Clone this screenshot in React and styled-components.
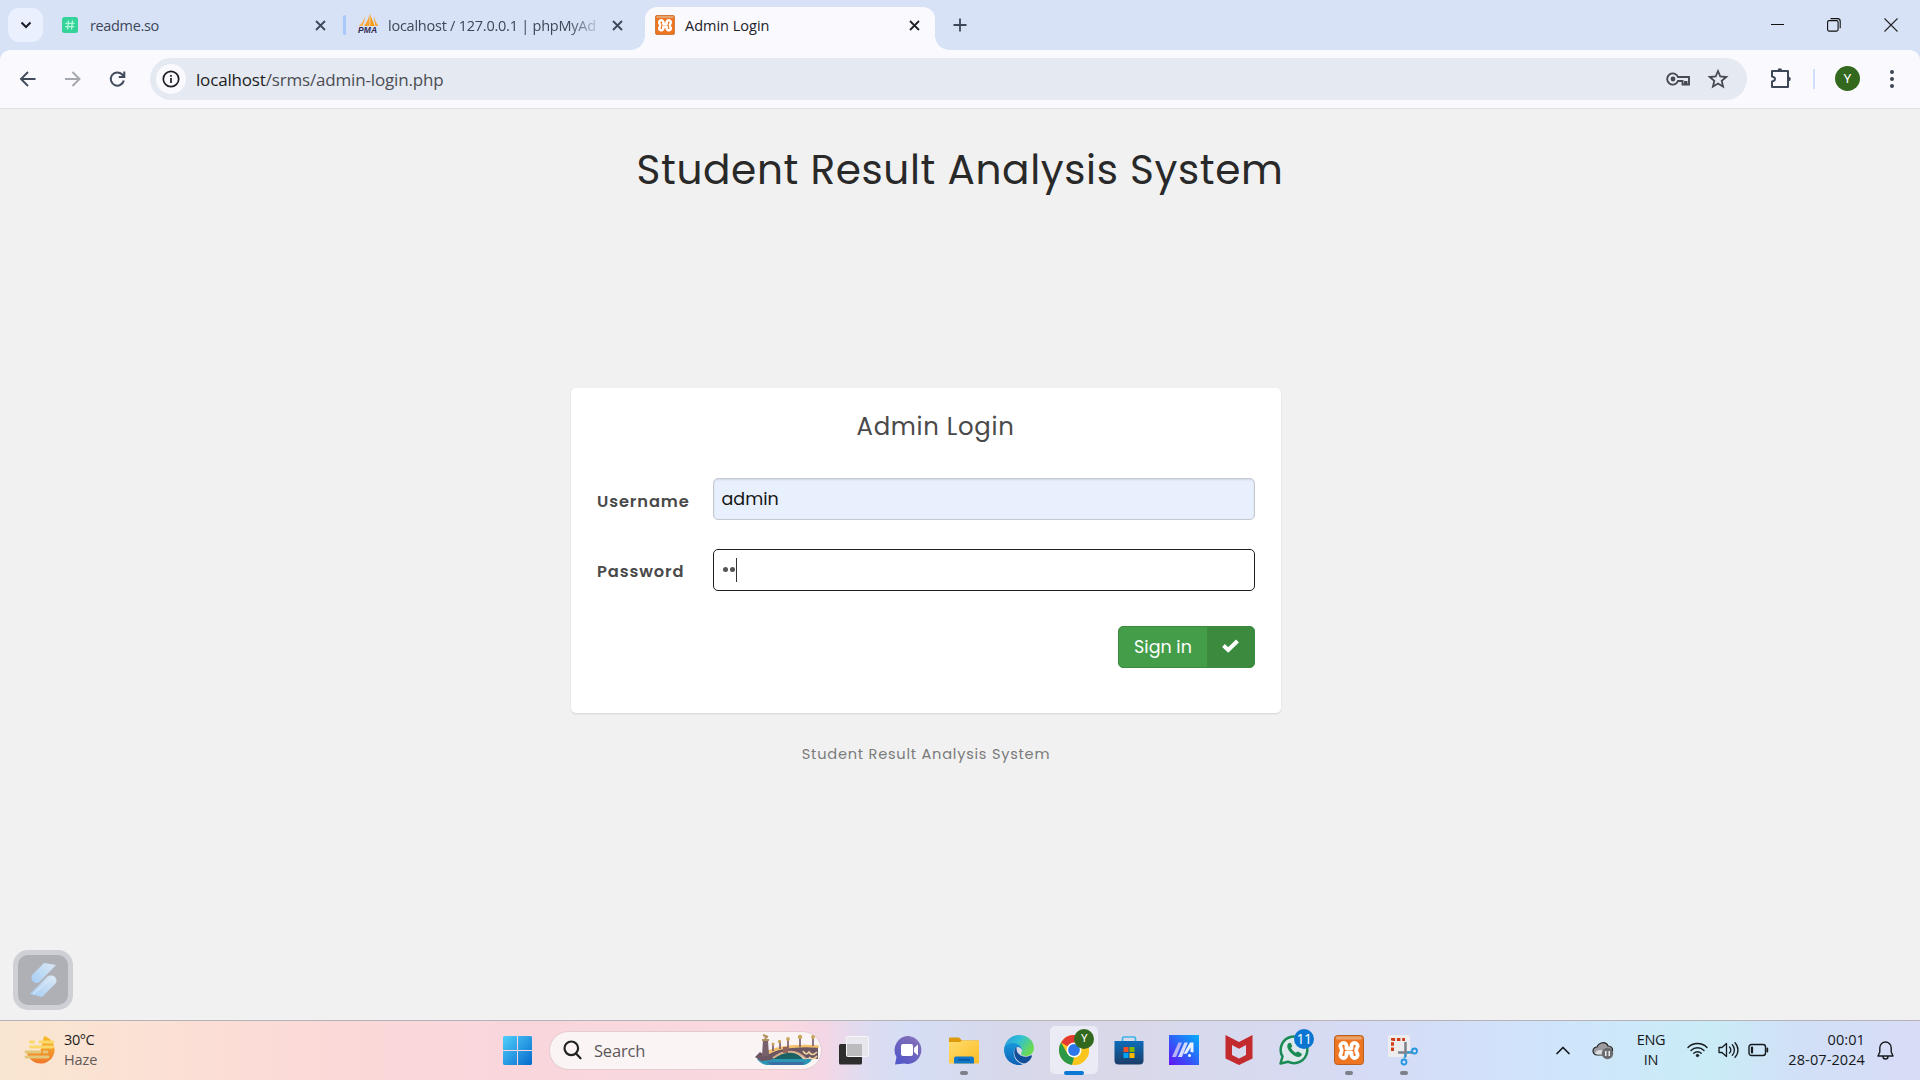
import React from "react";
import styled, { createGlobalStyle, css } from "styled-components";

const GlobalStyle = createGlobalStyle`
  * { box-sizing: border-box; }
  body { margin: 0; overflow: hidden; }
  h1, h2, p { margin: 0; }
  button, input { font: inherit; margin: 0; }
  svg { display: block; flex: none; }
`;

const uiFont = `"Segoe UI", "Open Sans", "Noto Sans", sans-serif`;
const siteFont = `Poppins, Inter, "Liberation Sans", sans-serif`;

const Screen = styled.div`
  width: 1920px;
  height: 1080px;
  display: flex;
  flex-direction: column;
  overflow: hidden;
  font-family: ${uiFont};
`;

/* ---------- browser tab strip ---------- */
const TabStrip = styled.div`
  height: 50px;
  flex: none;
  display: flex;
  align-items: center;
  background: #d8e2f6;
  padding-left: 8px;
`;
const TabSearch = styled.div`
  width: 35px;
  height: 34px;
  border-radius: 11px;
  background: #eaf0fe;
  display: grid;
  place-items: center;
`;
const Tab = styled.div`
  width: ${(p) => p.$width}px;
  height: 43px;
  margin-left: ${(p) => p.$gap || 0}px;
  margin-top: 7px;
  padding: 0 ${(p) => p.$end}px 7px ${(p) => p.$start}px;
  display: flex;
  align-items: center;
  color: #3d475a;
  position: relative;
  ${(p) =>
    p.$active &&
    css`
      background: #faf9fe;
      border-radius: 12px 12px 0 0;
      color: #202229;
      &::before,
      &::after {
        content: "";
        position: absolute;
        bottom: 0;
        width: 14px;
        height: 14px;
      }
      &::before {
        left: -14px;
        background: radial-gradient(circle at 0 0, transparent 13.5px, #faf9fe 14px);
      }
      &::after {
        right: -14px;
        background: radial-gradient(circle at 100% 0, transparent 13.5px, #faf9fe 14px);
      }
    `}
`;
const TabTitle = styled.span`
  flex: 1;
  min-width: 0;
  margin-left: ${(p) => p.$gap}px;
  padding-top: 1px;
  font-size: 14.5px;
  line-height: 20px;
  letter-spacing: ${(p) => p.$ls || 0}px;
  white-space: nowrap;
  ${(p) =>
    p.$fade &&
    css`
      margin-right: 14px;
      mask-image: linear-gradient(to right, #000 86%, rgba(0, 0, 0, 0.15));
    `}
`;
const TabDivider = styled.div`
  width: 3px;
  height: 20px;
  border-radius: 2px;
  background: #a8c7fa;
`;
const NewTab = styled.div`
  margin-left: 18px;
`;
const WindowButtons = styled.div`
  margin-left: auto;
  display: flex;
  align-items: center;
  gap: 43px;
  padding-right: 22px;
`;
const PmaLogo = styled.div`
  width: 21px;
  height: 24px;
  flex: none;
`;
const PmaName = styled.div`
  margin-top: -2px;
  font: italic 700 8.5px/10px "Liberation Sans", sans-serif;
  letter-spacing: 0.1px;
  color: #2e2a55;
`;

/* ---------- browser toolbar ---------- */
const ToolbarBack = styled.div`
  flex: none;
  background: #d8e2f6;
`;
const Toolbar = styled.div`
  height: 59px;
  display: flex;
  align-items: center;
  padding: 0 0 1px 17px;
  background: #faf9fe;
  border-radius: 10px 10px 0 0;
  border-bottom: 1px solid #dedfe5;
`;
const NavButtons = styled.div`
  display: flex;
  gap: 25px;
  width: 133px;
`;
const Omnibox = styled.div`
  width: 1597px;
  height: 42px;
  border-radius: 21px;
  background: #e5e9f2;
  display: flex;
  align-items: center;
  padding: 0 18px 0 6px;
`;
const InfoChip = styled.div`
  width: 30px;
  height: 30px;
  border-radius: 50%;
  background: #faf9fe;
  display: grid;
  place-items: center;
`;
const Url = styled.span`
  margin-left: 10px;
  padding-top: 1px;
  font-size: 17px;
  letter-spacing: ${(p) => p.$ls}px;
  color: #4b4e54;
  flex: 1;
  b {
    font-weight: 400;
    color: #1c1d20;
  }
`;
const OmniActions = styled.div`
  display: flex;
  align-items: center;
  gap: 16px;
`;
const ToolbarActions = styled.div`
  flex: 1;
  display: flex;
  align-items: center;
  padding-left: 23px;
`;
const ToolbarRule = styled.div`
  width: 2px;
  height: 20px;
  margin: 0 20px 0 21px;
  background: #cfe0fc;
`;
const Avatar = styled.div`
  width: 25px;
  height: 25px;
  border-radius: 50%;
  background: #33691e;
  color: #fff;
  display: grid;
  place-items: center;
  font: 13px Roboto, sans-serif;
  margin-right: 22px;
`;

/* ---------- login page ---------- */
const Page = styled.main`
  flex: 1;
  background: #f1f1f1;
  font-family: ${siteFont};
  display: flex;
  flex-direction: column;
`;
const Heading = styled.h1`
  margin-top: 37px;
  text-align: center;
  font-size: 40.625px;
  line-height: 48px;
  font-weight: 400;
  letter-spacing: 0.625px;
  color: #292929;
`;
const LoginColumn = styled.div`
  width: 710px;
  margin: 194px 0 0 571px;
`;
const Card = styled.section`
  height: 325px;
  padding: 22px 26px 0;
  background: #fff;
  border-radius: 5px;
  box-shadow: 0 1px 2px rgba(0, 0, 0, 0.12);
`;
const CardTitle = styled.h2`
  text-align: center;
  padding-left: 19px;
  font-size: 24.375px;
  line-height: 34px;
  font-weight: 400;
  letter-spacing: 0.7px;
  color: #4a4a4a;
`;
const Field = styled.label`
  display: flex;
  align-items: center;
  margin-top: ${(p) => p.$top}px;
  height: 42px;
`;
const FieldName = styled.span`
  width: 116px;
  padding-top: ${(p) => p.$drop}px;
  font-size: 16.25px;
  font-weight: 600;
  letter-spacing: 0.88px;
  color: #4a4a4a;
`;
const Input = styled.div`
  flex: 1;
  height: 42px;
  display: flex;
  align-items: center;
  padding: 0 8px 1px ${(p) => (p.$focused ? 8 : 7.5)}px;
  border-radius: 5px;
  border: 1px solid ${(p) => (p.$focused ? "#1f1f1f" : "#c5c8cf")};
  background: ${(p) => (p.$focused ? "#fff" : "#e8f0fe")};
  box-shadow: ${(p) => (p.$focused ? "none" : "inset 0 1px 2px rgba(0,0,0,.1)")};
  font-size: 17.5px;
  color: #151515;
`;
const Dot = styled.i`
  width: 5px;
  height: 5px;
  margin: 0 2px 0 1px;
  border-radius: 50%;
  background: #555;
  & + & {
    margin: 0;
  }
`;
const Caret = styled.i`
  width: 1px;
  height: 24px;
  margin-left: 1px;
  background: #333;
`;
const Actions = styled.div`
  display: flex;
  justify-content: flex-end;
  margin-top: 35px;
`;
const SignIn = styled.button`
  width: 137px;
  height: 42px;
  padding: 0;
  display: flex;
  border: 1px solid #3b8a3e;
  border-radius: 5px;
  overflow: hidden;
  background: #449d48;
  color: #fff;
  font-size: 17.5px;
`;
const SignInText = styled.span`
  flex: 1;
  line-height: 41px;
`;
const SignInIcon = styled.span`
  width: 47px;
  display: grid;
  place-items: center;
  padding-bottom: 2px;
  background: #3b8a3e;
`;
const Footnote = styled.p`
  margin-top: 30px;
  text-align: center;
  font-size: 14.625px;
  line-height: 22px;
  letter-spacing: 0.75px;
  color: #7b7b7b;
`;
const Widget = styled.div`
  width: 60px;
  height: 60px;
  margin: auto 0 10px 13px;
  padding-left: 1px;
  border: 5px solid #cfd0d5;
  border-radius: 15px;
  background: #afb0b6;
  display: grid;
  place-items: center;
`;

/* ---------- taskbar ---------- */
const Taskbar = styled.footer`
  height: 60px;
  flex: none;
  display: flex;
  align-items: center;
  padding-bottom: 1px;
  border-top: 1px solid #b5b2b8;
  background: linear-gradient(
    90deg,
    #f9e6d0 0,
    #fbe0d5 170px,
    #fbd9d8 330px,
    #f8d6dc 520px,
    #f9d8df 780px,
    #f3d7e6 825px,
    #dcdcf2 870px,
    #d5def5 910px,
    #d7d8ea 1010px,
    #d9d8e9 1120px,
    #d5dcf6 1400px,
    #cfe5fb 1560px,
    #caecf7 1710px,
    #d1e0f7 1800px,
    #d9dcf7 1920px
  );
`;
const Weather = styled.div`
  width: 503px;
  padding-left: 24px;
  display: flex;
  align-items: center;
  gap: 9px;
`;
const WeatherText = styled.div`
  font-size: 14.5px;
  line-height: 20px;
  letter-spacing: -0.4px;
  color: #1d1b1b;
  span {
    display: block;
    color: #64595a;
    letter-spacing: -0.1px;
  }
`;
const SearchBox = styled.div`
  width: 273px;
  height: 39px;
  margin-left: 17px;
  margin-right: 4px;
  padding: 0 2px 0 13px;
  border-radius: 20px;
  border: 1px solid #e4cbd0;
  background: #fbf4f5;
  display: flex;
  align-items: center;
  font-size: 16.5px;
  letter-spacing: -0.2px;
  color: #5c5859;
`;
const SearchText = styled.span`
  flex: 1;
  margin-left: 12px;
`;
const Slot = styled.div`
  width: 55px;
  height: 59px;
  display: grid;
  place-items: center;
  position: relative;
`;
const Highlight = styled.div`
  width: 48px;
  height: 48px;
  border-radius: 5px;
  background: #ebebf5;
  display: grid;
  place-items: center;
`;
const Indicator = styled.i`
  position: absolute;
  left: 50%;
  bottom: 5px;
  width: ${(p) => (p.$wide ? 20 : 8)}px;
  height: 4px;
  border-radius: 2px;
  transform: translateX(-50%);
  background: ${(p) => (p.$wide ? "#0a78d4" : "#7d7f89")};
`;
const Badge = styled.span`
  position: absolute;
  left: 28px;
  top: 8px;
  width: 20px;
  height: 20px;
  border-radius: 50%;
  display: grid;
  place-items: center;
  background: ${(p) => p.$color};
  color: #fff;
  font-family: ${(p) => p.$font};
  font-size: ${(p) => p.$size}px;
  letter-spacing: -0.6px;
`;
const Tray = styled.div`
  margin-left: auto;
  width: 364px;
  display: flex;
  align-items: center;
  color: #16191d;
`;
const TrayIcon = styled.div`
  margin-left: ${(p) => p.$gap || 0}px;
`;
const TrayText = styled.div`
  width: ${(p) => p.$width}px;
  margin-left: ${(p) => p.$gap}px;
  text-align: ${(p) => p.$align};
  font-size: 14.5px;
  line-height: 20px;
  letter-spacing: ${(p) => p.$ls}px;
  white-space: nowrap;
`;

/* ---------- drawings ---------- */
const CloseX = ({ color = "#3d475a" }) => (
  <svg width="11" height="11" viewBox="0 0 11 11" stroke={color} strokeWidth="1.8">
    <path d="M1 1l9 9M10 1l-9 9" />
  </svg>
);

const XamppIcon = ({ size }) => (
  <svg width={size} height={size} viewBox="0 0 30 30">
    <rect x=".5" y=".5" width="29" height="29" rx="3" fill="#ee7623" stroke="#b8601f" />
    <rect x="2" y="1.5" width="26" height="3" rx="1.5" fill="#e9a36e" />
    <g fill="none" stroke="#fff" strokeWidth="3.8" strokeLinecap="round" strokeLinejoin="round">
      <path d="M12.500 13.300V11a3.100 3.100 0 1 0-5.300 2.200q1.300 2.300 0 4.500a3.100 3.100 0 1 0 5.300 2.200v-2.200h5v2.200a3.100 3.100 0 1 0 5.300-2.200q-1.300-2.200 0-4.500A3.100 3.100 0 1 0 17.500 11v2.300z" />
    </g>
  </svg>
);

const ReadmeIcon = () => (
  <svg width="16" height="16" viewBox="0 0 16 16">
    <rect width="16" height="16" rx="2.500" fill="#34d399" />
    <path d="M6.500 3.500l-1 9M10.500 3.500l-1 9M3.500 6.300h9M3.200 9.700h9" stroke="#b7f7dc" strokeWidth="1.300" />
  </svg>
);

const PmaIcon = () => (
  <PmaLogo>
    <svg width="21" height="14" viewBox="0 0 21 14">
      <path d="M11.500 0v13H6C9 9 11 5 11.500 0z" fill="#f9a12b" />
      <path d="M12.300 1c1 4 3 8 4.500 12h-4.500z" fill="#f89c0e" />
      <path d="M7 3c0 4-1 7-2.500 10H.8C4 10 6 7 7 3z" fill="#fbb050" />
      <path d="M16 3c1 4 2 7 4.500 10h-3C17 10 16 7 16 3z" fill="#f9a12b" />
    </svg>
    <PmaName>PMA</PmaName>
  </PmaLogo>
);

const WidgetIcon = () => (
  <svg width="28" height="36" viewBox="0 0 28 36">
    <defs>
      <linearGradient id="ribbon" x1="0" y1="1" x2="1" y2="0">
        <stop offset="0" stopColor="#a5cdf5" />
        <stop offset="1" stopColor="#dce9f5" />
      </linearGradient>
    </defs>
    <path d="M14 1l12 2L9 20.500C5 22 1 19 1.500 15c0-1 .5-2 1.500-3z" fill="url(#ribbon)" />
    <path d="M0 32l17-17c4-3 9-1 9.500 3 0 2-.5 3-1.500 4L12 35z" fill="url(#ribbon)" />
    <path d="M3 32l20-17" stroke="#e4eef9" strokeWidth="1" />
  </svg>
);

const HazeIcon = () => (
  <svg width="31" height="30" viewBox="0 0 31 30">
    <defs>
      <linearGradient id="sun" x1="0" y1="0" x2="0" y2="1">
        <stop offset="0" stopColor="#f9bf2c" />
        <stop offset="1" stopColor="#f0762a" />
      </linearGradient>
    </defs>
    <path d="M20 1a14 14 0 1 1-17 17h13z" fill="url(#sun)" />
    <g strokeWidth="2.800" strokeLinecap="round">
      <path d="M6.500 7h3M16 7h13M6.500 12h22" stroke="#fbd968" />
      <path d="M2 17h14M20 17h3M2 22h22" stroke="#e2c878" />
    </g>
  </svg>
);

const StartIcon = () => (
  <svg width="29" height="29" viewBox="0 0 29 29">
    <defs>
      <linearGradient id="win" x1="0" y1="0" x2="1" y2="1">
        <stop offset="0" stopColor="#4fd0fc" />
        <stop offset="1" stopColor="#0669cb" />
      </linearGradient>
    </defs>
    <path d="M1 0h13v14H0V1zM15 0h13l1 1v13H15zM0 15h14v14H1l-1-1zM15 15h14v13l-1 1H15z" fill="url(#win)" />
  </svg>
);

const BridgeIcon = () => (
  <svg width="64" height="32" viewBox="0 0 64 32">
    <path d="M2 25h55c-2 4-6 6-10 6H13c-5 0-9-3-11-6z" fill="#2c97b5" />
    <path d="M12 28h38l-3 3H16z" fill="#3a6ea5" />
    <path d="M14 25c8-9 26-10 34 0z" fill="#1b6264" />
    <path d="M0 23l5-5 3 2v-4h6v4c10-7 30-8 49-7v12l-13-1c-9-8-24-8-34 2l-10 1z" fill="#6d5664" />
    <path d="M14 19c12-6 32-7 49-6v-1c-18-1-37 0-49 5z" fill="#f6cf7c" stroke="#f1c16c" strokeWidth="1.500" />
    <path d="M18 24c12-9 24-8 33 1" fill="none" stroke="#d9b08a" strokeWidth="2" />
    <path d="M48 17q3 5 6 1q3 5 8 0M54 23q4 4 8-1" fill="none" stroke="#efd29a" strokeWidth="1.700" />
    <path d="M28 13h5v6h-5z" fill="#94625e" />
    <path d="M8 6h5l1 16H7z" fill="#76616c" />
    <path d="M7 6h7M10.500 5V2M8 1l5 2" stroke="#b3915e" strokeWidth="2" />
    <path d="M18 10v7M25 8v7M33 5v9M45 3v10M58 3v9" stroke="#775866" strokeWidth="1.600" />
    <g fill="#c9a45c">
      <circle cx="18" cy="10" r="1.500" />
      <circle cx="24.500" cy="7.500" r="1.700" />
      <circle cx="33" cy="5" r="1.900" />
      <circle cx="45" cy="3" r="2.200" />
      <circle cx="58" cy="3" r="1.900" />
    </g>
  </svg>
);

const TaskViewIcon = () => (
  <svg width="30" height="29" viewBox="0 0 30 29">
    <rect x="0" y="8" width="23" height="20.500" rx="1.500" fill="#2d2d2d" />
    <rect x="7.500" y=".5" width="22" height="20" rx="1" fill="#e9e9ec" fillOpacity=".85" stroke="#f6f6f8" />
    <path d="M8 8h15v12H8z" fill="#bcbcbe" />
  </svg>
);

const ChatIcon = () => (
  <svg width="30" height="29" viewBox="0 0 30 29">
    <defs>
      <linearGradient id="chat" x1="1" y1="0" x2=".3" y2="1">
        <stop offset="0" stopColor="#8f88dd" />
        <stop offset=".25" stopColor="#7f6cb9" />
        <stop offset="1" stopColor="#5458c8" />
      </linearGradient>
    </defs>
    <path d="M15 0a14 14 0 1 1-5 27.500L1 28.500 2.500 21A14 14 0 0 1 15 0z" fill="url(#chat)" />
    <rect x="7" y="8" width="12" height="12" rx="2" fill="#fff" />
    <path d="M20 12l4-3.500v11L20 16z" fill="#fff" />
  </svg>
);

const FolderIcon = () => (
  <svg width="30" height="27" viewBox="0 0 30 27">
    <defs>
      <linearGradient id="folder" x1="0" y1="0" x2="1" y2="1">
        <stop offset="0" stopColor="#ffdc6a" />
        <stop offset="1" stopColor="#fbbd27" />
      </linearGradient>
    </defs>
    <path d="M0 1.500Q0 .5 1 .5h9l3 3h16q1 0 1 1V10H0z" fill="#dc9a0c" />
    <path d="M0 5h11l2-1.500h16.500l.5.5v21.500q0 1-1 1H1q-1 0-1-1z" fill="url(#folder)" />
    <path d="M5 26.500v-5q0-2 2-2h16q2 0 2 2v5z" fill="#0f76c8" />
    <path d="M9 22.800h12" stroke="#07508f" strokeWidth="1.200" />
  </svg>
);

const EdgeIcon = () => (
  <svg width="30" height="30" viewBox="0 0 30 30">
    <defs>
      <linearGradient id="edgeTop" x1="0" y1="0" x2="1" y2=".5">
        <stop offset="0" stopColor="#2a94dc" />
        <stop offset=".5" stopColor="#2fc0d6" />
        <stop offset="1" stopColor="#6bdb53" />
      </linearGradient>
      <linearGradient id="edgeSide" x1="0" y1="0" x2="0" y2="1">
        <stop offset="0" stopColor="#1796db" />
        <stop offset="1" stopColor="#0e62b6" />
      </linearGradient>
    </defs>
    <path d="M0 15C.5 6 7 0 15 0c9 0 15 6 15 13 0 5-4 8-8 8-3 0-5-1-5-2s1-1.500 1-4c0-3-3-6-8-6-5 0-9 2-10 6z" fill="url(#edgeTop)" />
    <path d="M0 15c0-4 4-7 9-7 5 0 9 3 9 7-1-2-3-3-4-3-3 0-5 4-4 8 1 5 4 8 9 9.500A15 15 0 0 1 0 15z" fill="url(#edgeSide)" />
    <path d="M12.500 12c-3 2-3 8 0 12 3 4 8 6 11 3 2-1 4-4 4.500-6 0-1-1-1-1.500-.5-5 2.500-9 1-11-1-3-2-3-5-3-7.500z" fill="#104f98" />
  </svg>
);

const ChromeIcon = () => (
  <svg width="30" height="30" viewBox="0 0 30 30">
    <circle cx="15" cy="15" r="15" fill="#fbc520" />
    <path d="M15 15L2 7.500A15 15 0 0 1 28 7.500H15z" fill="#e53a30" />
    <path d="M2 7.500l6.500 11.200L15 22.500l-2 7.400A15 15 0 0 1 2 7.500z" fill="#2a9a48" />
    <path d="M28 7.500H15l6.500 11.200L14 30A15 15 0 0 0 28 7.500z" fill="#fbc520" />
    <circle cx="15" cy="15" r="7.500" fill="#fff" />
    <circle cx="15" cy="15" r="5.900" fill="#2b77ea" />
  </svg>
);

const StoreIcon = () => (
  <svg width="30" height="30" viewBox="0 0 30 30">
    <defs>
      <linearGradient id="store" x1="0" y1="0" x2="0" y2="1">
        <stop offset="0" stopColor="#0c6cb9" />
        <stop offset="1" stopColor="#1c3d69" />
      </linearGradient>
    </defs>
    <path d="M8.500 6V3.500Q8.500 2 10 2h10q1.500 0 1.500 1.500V6" fill="none" stroke="#3ab5ea" strokeWidth="1.700" />
    <path d="M.5 6h29v19.500q0 4-4 4h-21q-4 0-4-4z" fill="url(#store)" />
    <path d="M9.500 12H14.500v5H9.500z" fill="#f25022" />
    <path d="M15.500 12H20.500v5H15.500z" fill="#7fba00" />
    <path d="M9.500 18H14.500v5H9.500z" fill="#00a4ef" />
    <path d="M15.500 18H20.500v5H15.500z" fill="#ffb900" />
  </svg>
);

const StripeIcon = () => (
  <svg width="30" height="30" viewBox="0 0 30 30">
    <defs>
      <linearGradient id="stripe" x1="0" y1="1" x2="1" y2="0">
        <stop offset="0" stopColor="#6412f5" />
        <stop offset=".5" stopColor="#2d62f8" />
        <stop offset="1" stopColor="#05aefc" />
      </linearGradient>
    </defs>
    <path d="M0 0h30v30H0z" fill="url(#stripe)" />
    <path d="M3 22L9.500 7.500H13L7 22z" fill="#b9b4f8" />
    <path d="M9 22L15.500 7.500h3.300L13 22z" fill="#d7dcfd" />
    <path d="M14.500 19L21 7.500h3.500V17.500l-3-.5v-4.500L18 18.500z" fill="#e9f1ff" />
    <circle cx="20.500" cy="20.500" r="1.500" fill="#fff" />
  </svg>
);

const ShieldIcon = () => (
  <svg width="28" height="30" viewBox="0 0 28 30">
    <path d="M.5 0L14 7 27.500 0v23.500L14 30 .5 23.500zM7 10v10l7 3.500 7-3.500V10l-7 3.700z" fill="#c32b2f" fillRule="evenodd" />
  </svg>
);

const WhatsAppIcon = () => (
  <svg width="30" height="30" viewBox="0 0 30 30">
    <path d="M1.500 28.500l2-7A13.300 13.300 0 1 1 9 26.700z" fill="#dce8ec" stroke="#1b8b56" strokeWidth="2.500" strokeLinejoin="round" />
    <path d="M10 8c-3 2-2 6 2 10 4 4 8 5 10 3 1-1 1-2 0-2.700l-2.500-1.500c-1-.5-1.500 0-2.500 1-2-.7-4-2.700-5-5 1-1 1.300-1.500 1-2.300L12 8.200Q11.200 7.300 10 8z" fill="#1b8b56" />
  </svg>
);

const SnipIcon = () => (
  <svg width="31" height="31" viewBox="0 0 31 31">
    <rect x="0" y="0" width="22" height="22" rx="2" fill="#ededef" />
    <path d="M4.500 16V4.500H17" fill="none" stroke="#cf3c16" strokeWidth="3" strokeDasharray="3.500 1.800" />
    <path d="M17.500 7v15M10 17.500h15" stroke="#7e828a" strokeWidth="2.500" />
    <path d="M19 17.500l4-.5M17.500 19l-1 4" stroke="#2f9fe0" strokeWidth="2" />
    <circle cx="26.500" cy="16" r="2.500" fill="none" stroke="#2697df" strokeWidth="1.800" />
    <circle cx="16" cy="27" r="2.500" fill="none" stroke="#2697df" strokeWidth="1.800" />
  </svg>
);

const line = { fill: "none", stroke: "currentColor", strokeLinecap: "round", strokeLinejoin: "round" };

function BrowserTabs() {
  return (
    <TabStrip>
      <TabSearch>
        <svg width="12" height="8" viewBox="0 0 12 8" fill="none" stroke="#1b1d22" strokeWidth="2">
          <path d="M1.500 1.500L6 6l4.500-4.500" />
        </svg>
      </TabSearch>
      <Tab $width={300} $start={19} $end={17}>
        <ReadmeIcon />
        <TabTitle $gap={12} $ls={-0.35}>readme.so</TabTitle>
        <CloseX />
      </Tab>
      <TabDivider />
      <Tab $width={299} $start={12} $end={22}>
        <PmaIcon />
        <TabTitle $gap={9} $fade $ls={-0.24}>localhost / 127.0.0.1 | phpMyAd</TabTitle>
        <CloseX />
      </Tab>
      <Tab $width={290} $start={10} $end={15} $active>
        <XamppIcon size={20} />
        <TabTitle $gap={10} $ls={0}>Admin Login</TabTitle>
        <CloseX color="#202229" />
      </Tab>
      <NewTab>
        <svg width="14" height="14" viewBox="0 0 14 14" stroke="#3d475a" strokeWidth="1.800">
          <path d="M7 .5v13M.5 7h13" />
        </svg>
      </NewTab>
      <WindowButtons>
        <svg width="13" height="14" viewBox="0 0 13 14" stroke="#111" strokeWidth="1">
          <path d="M0 6.500h13" />
        </svg>
        <svg width="14" height="14" viewBox="0 0 14 14" fill="none" stroke="#111" strokeWidth="1.100">
          <rect x=".6" y="2.600" width="10.500" height="10.500" rx="1.500" />
          <path d="M3.500.6h7q2.700 0 2.700 2.700v7" />
        </svg>
        <svg width="14" height="14" viewBox="0 0 14 14" stroke="#222" strokeWidth="1.100">
          <path d="M.5.5l13 13M13.500.5l-13 13" />
        </svg>
      </WindowButtons>
    </TabStrip>
  );
}

function BrowserToolbar() {
  return (
    <ToolbarBack>
      <Toolbar>
        <NavButtons>
          <svg width="20" height="20" viewBox="0 0 20 20" fill="none" stroke="#414b5b" strokeWidth="1.900">
            <path d="M18.500 10H4.500M11 3l-7 7 7 7" />
          </svg>
          <svg width="20" height="20" viewBox="0 0 20 20" fill="none" stroke="#a5a7ae" strokeWidth="1.900">
            <path d="M3 10h14M10.500 3l7 7-7 7" />
          </svg>
          <svg width="20" height="20" viewBox="0 0 20 20" fill="none" stroke="#414b5b" strokeWidth="2">
            <path d="M16.800 11.500A6.600 6.600 0 1 1 15 5.300L17 7.500M17.300 2.500v5.500h-5.500" />
          </svg>
        </NavButtons>
        <Omnibox>
          <InfoChip>
            <svg width="18" height="18" viewBox="0 0 18 18" fill="none" stroke="#1d1e21" strokeWidth="1.700">
              <circle cx="9" cy="9" r="7.700" />
              <path d="M9 8v5M9 5v1.700" />
            </svg>
          </InfoChip>
          <Url $ls={-0.17}>
            <b>localhost</b>/srms/admin-login.php
          </Url>
          <OmniActions>
            <svg width="25" height="16" viewBox="0 0 25 16" fill="none" stroke="#46494f" strokeWidth="1.900">
              <path d="M12 6a5.600 5.600 0 1 0 0 4h4.500v3.500h2.500V11h1.500v2.500H23V6z" />
              <circle cx="7" cy="8" r="2.400" fill="#46494f" stroke="none" />
            </svg>
            <svg width="22" height="22" viewBox="0 0 22 22" fill="none" stroke="#46494f" strokeWidth="1.800">
              <path d="M11 3l2.300 5.500 6 .5-4.600 3.900 1.400 5.800-5.100-3.100-5.100 3.100 1.400-5.800L2.700 9l6-.5z" />
            </svg>
          </OmniActions>
        </Omnibox>
        <ToolbarActions>
          <svg width="22" height="22" viewBox="0 0 22 22" fill="none" stroke="#3d4757" strokeWidth="2">
            <path d="M2 3h16v16H2v-5.500q3-.5 3-2.500t-3-2.500z" strokeLinejoin="round" />
            <path d="M7.500 2.500a2.300 2.300 0 0 1 4.600 0zM18.500 8.700a2.300 2.300 0 0 1 0 4.600z" fill="#3d4757" stroke="none" />
          </svg>
          <ToolbarRule />
          <Avatar>Y</Avatar>
          <svg width="20" height="20" viewBox="0 0 20 20" fill="#3d4757">
            <circle cx="10" cy="3" r="2" />
            <circle cx="10" cy="10" r="2" />
            <circle cx="10" cy="17" r="2" />
          </svg>
        </ToolbarActions>
      </Toolbar>
    </ToolbarBack>
  );
}

function LoginPage() {
  return (
    <Page>
      <Heading>Student Result Analysis System</Heading>
      <LoginColumn>
        <Card>
          <CardTitle>Admin Login</CardTitle>
          <Field $top={34}>
            <FieldName $drop={4}>Username</FieldName>
            <Input>admin</Input>
          </Field>
          <Field $top={29}>
            <FieldName $drop={3}>Password</FieldName>
            <Input $focused>
              <Dot />
              <Dot />
              <Caret />
            </Input>
          </Field>
          <Actions>
            <SignIn type="button">
              <SignInText>Sign in</SignInText>
              <SignInIcon>
                <svg width="17" height="14" viewBox="0 0 17 14" fill="none" stroke="#fff" strokeWidth="4">
                  <path d="M1.500 6.500l4.700 4.500 9.300-9" />
                </svg>
              </SignInIcon>
            </SignIn>
          </Actions>
        </Card>
        <Footnote>Student Result Analysis System</Footnote>
      </LoginColumn>
      <Widget>
        <WidgetIcon />
      </Widget>
    </Page>
  );
}

function WindowsTaskbar() {
  return (
    <Taskbar>
      <Weather>
        <HazeIcon />
        <WeatherText>
          30°C<span>Haze</span>
        </WeatherText>
      </Weather>
      <StartIcon />
      <SearchBox>
        <svg width="19" height="20" viewBox="0 0 19 20" fill="none" stroke="#222" strokeWidth="2.200" strokeLinecap="round">
          <circle cx="8.300" cy="8.300" r="6.800" />
          <path d="M13 13.500l4.500 4.800" />
        </svg>
        <SearchText>Search</SearchText>
        <BridgeIcon />
      </SearchBox>
      <Slot><TaskViewIcon /></Slot>
      <Slot><ChatIcon /></Slot>
      <Slot>
        <FolderIcon />
        <Indicator />
      </Slot>
      <Slot><EdgeIcon /></Slot>
      <Slot>
        <Highlight><ChromeIcon /></Highlight>
        <Badge $color="#33691e" $size={11} $font="Roboto, sans-serif">Y</Badge>
        <Indicator $wide />
      </Slot>
      <Slot><StoreIcon /></Slot>
      <Slot><StripeIcon /></Slot>
      <Slot><ShieldIcon /></Slot>
      <Slot>
        <WhatsAppIcon />
        <Badge $color="#0b76d1" $size={14} $font={uiFont}>11</Badge>
      </Slot>
      <Slot>
        <XamppIcon size={30} />
        <Indicator />
      </Slot>
      <Slot>
        <SnipIcon />
        <Indicator />
      </Slot>
      <Tray>
        <TrayIcon>
          <svg width="14" height="9" viewBox="0 0 14 9" {...line} strokeWidth="1.700">
            <path d="M1 7.500l6-6 6 6" />
          </svg>
        </TrayIcon>
        <TrayIcon $gap={22}>
          <svg width="22" height="20" viewBox="0 0 22 20">
            <path d="M5 15a4 4 0 0 1 0-8c2-5 9-6 11-1 3 0 5 2 4.500 5-.5 3-3 4-5 4z" fill="#9b9ba0" stroke="#222" strokeWidth="1.200" />
            <path d="M3 13.500c1-4 6-4 8-3l3 4H5z" fill="#dcdde0" />
            <circle cx="15.500" cy="13.500" r="5.700" fill="#6b6c70" />
            <path d="M13.800 11v5M17.200 11v5" stroke="#fff" strokeWidth="1.300" />
          </svg>
        </TrayIcon>
        <TrayText $gap={17} $width={40} $align="center" $ls={-0.3}>
          ENG<br />IN
        </TrayText>
        <TrayIcon $gap={16}>
          <svg width="21" height="16" viewBox="0 0 21 16" {...line} strokeWidth="1.400">
            <path d="M1 5.500a13.400 13.400 0 0 1 19 0M4 8.500a9.200 9.200 0 0 1 13 0M6.800 11.300a5.200 5.200 0 0 1 7.400 0" />
            <circle cx="10.500" cy="13.500" r="1.300" fill="currentColor" strokeWidth=".6" />
          </svg>
        </TrayIcon>
        <TrayIcon $gap={10}>
          <svg width="21" height="18" viewBox="0 0 21 18" {...line} strokeWidth="1.300">
            <path d="M1 6.500h3L8.500 2.500v13L4 11.500H1zM11.500 6a4 4 0 0 1 0 6M14.300 3.800a7.500 7.500 0 0 1 0 10.400M17 1.700a10.500 10.500 0 0 1 0 14.600" />
          </svg>
        </TrayIcon>
        <TrayIcon $gap={9}>
          <svg width="21" height="14" viewBox="0 0 21 14" {...line} strokeWidth="1.400">
            <rect x="1" y="1.500" width="16.500" height="11" rx="2.500" />
            <path d="M4 4.500v5" strokeWidth="2.200" />
            <path d="M19.300 5.500v3" strokeWidth="1.800" />
          </svg>
        </TrayIcon>
        <TrayText $gap={16} $width={80} $align="right" $ls={0.1}>
          00:01<br />28-07-2024
        </TrayText>
        <TrayIcon $gap={12}>
          <svg width="17" height="19" viewBox="0 0 17 19" {...line} strokeWidth="1.400">
            <path d="M8.500 1a5.700 5.700 0 0 0-5.700 5.700V11L1 15h15l-1.800-4V6.700A5.700 5.700 0 0 0 8.500 1zM6 15.500a2.500 2.500 0 0 0 5 0" />
          </svg>
        </TrayIcon>
      </Tray>
    </Taskbar>
  );
}

export default function App() {
  return (
    <Screen>
      <GlobalStyle />
      <BrowserTabs />
      <BrowserToolbar />
      <LoginPage />
      <WindowsTaskbar />
    </Screen>
  );
}
